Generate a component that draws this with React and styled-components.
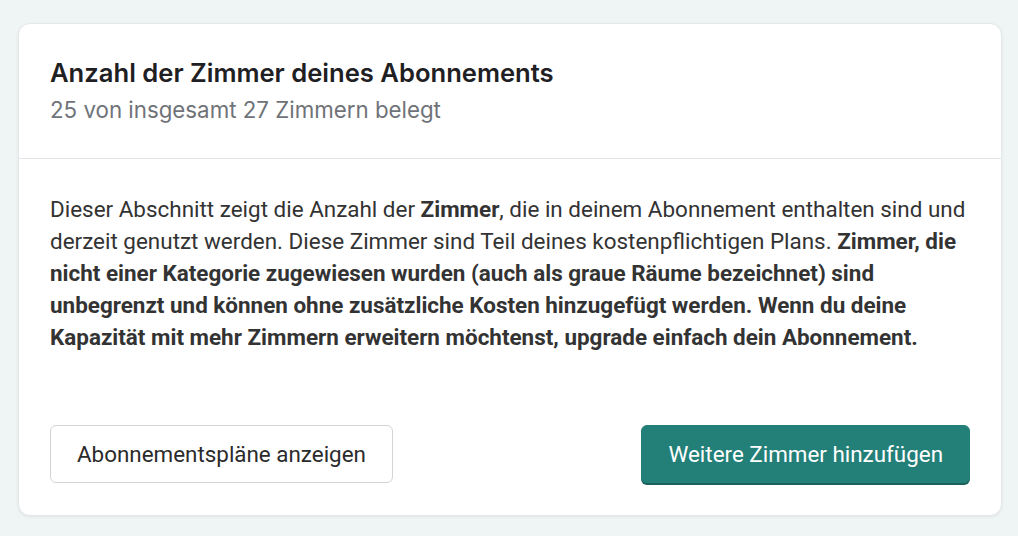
import React from 'react';
import styled, { createGlobalStyle } from 'styled-components';

const GlobalStyle = createGlobalStyle`
  html, body {
    margin: 0;
    padding: 0;
    background: #eff4f4;
  }
  * { box-sizing: border-box; }
`;

const Page = styled.div`
  padding: 23px 16px 20px 18px;
`;

const Card = styled.div`
  width: 984px;
  background: #ffffff;
  border: 1px solid #e3e8e8;
  border-radius: 12px;
  box-shadow: 0 1px 3px rgba(0, 0, 0, 0.07);
`;

const Header = styled.div`
  padding: 31px 31px 32px;
  border-bottom: 1px solid #e3e6e8;
`;

const Title = styled.h2`
  margin: 0 0 3px;
  font-family: Inter, 'Noto Sans', sans-serif;
  font-size: 25.6px;
  font-weight: 600;
  line-height: 36px;
  color: #1f2023;
`;

const Subtitle = styled.p`
  margin: 0;
  font-family: Inter, 'Noto Sans', sans-serif;
  font-size: 22.3px;
  line-height: 32px;
  color: #6f7378;
`;

const Body = styled.div`
  padding: 34px 31px 32px;
`;

const Text = styled.p`
  margin: 0;
  font-family: Roboto, 'Liberation Sans', sans-serif;
  font-size: 22.45px;
  line-height: 32px;
  color: #333333;

  strong {
    font-weight: 700;
  }
`;

const Actions = styled.div`
  display: flex;
  justify-content: space-between;
  align-items: center;
  margin-top: 72px;
`;

const Button = styled.button`
  height: 58px;
  padding: 0 26px;
  border-radius: 6px;
  font-family: Roboto, 'Liberation Sans', sans-serif;
  font-size: 22.4px;
  cursor: pointer;
  border: 1px solid ${({ $primary }) => ($primary ? '#238078' : '#d2d4d6')};
  background: ${({ $primary }) => ($primary ? '#238078' : '#ffffff')};
  color: ${({ $primary }) => ($primary ? '#ffffff' : '#2b2b2b')};
  box-shadow: ${({ $primary }) => ($primary ? '0 2px 0 #1b615b' : 'none')};
`;

export default function App() {
  return (
    <>
      <GlobalStyle />
      <Page>
        <Card>
          <Header>
            <Title>Anzahl der Zimmer deines Abonnements</Title>
            <Subtitle>25 von insgesamt 27 Zimmern belegt</Subtitle>
          </Header>
          <Body>
            <Text>
              Dieser Abschnitt zeigt die Anzahl der <strong>Zimmer</strong>, die in deinem Abonnement
              enthalten sind und derzeit genutzt werden. Diese Zimmer sind Teil deines
              kostenpflichtigen Plans.{' '}
              <strong>
                Zimmer, die nicht einer Kategorie zugewiesen wurden (auch als graue Räume
                bezeichnet) sind unbegrenzt und können ohne zusätzliche Kosten hinzugefügt werden.
                Wenn du deine Kapazität mit mehr Zimmern erweitern möchtenst, upgrade einfach dein
                Abonnement.
              </strong>
            </Text>
            <Actions>
              <Button>Abonnementspläne anzeigen</Button>
              <Button $primary>Weitere Zimmer hinzufügen</Button>
            </Actions>
          </Body>
        </Card>
      </Page>
    </>
  );
}
